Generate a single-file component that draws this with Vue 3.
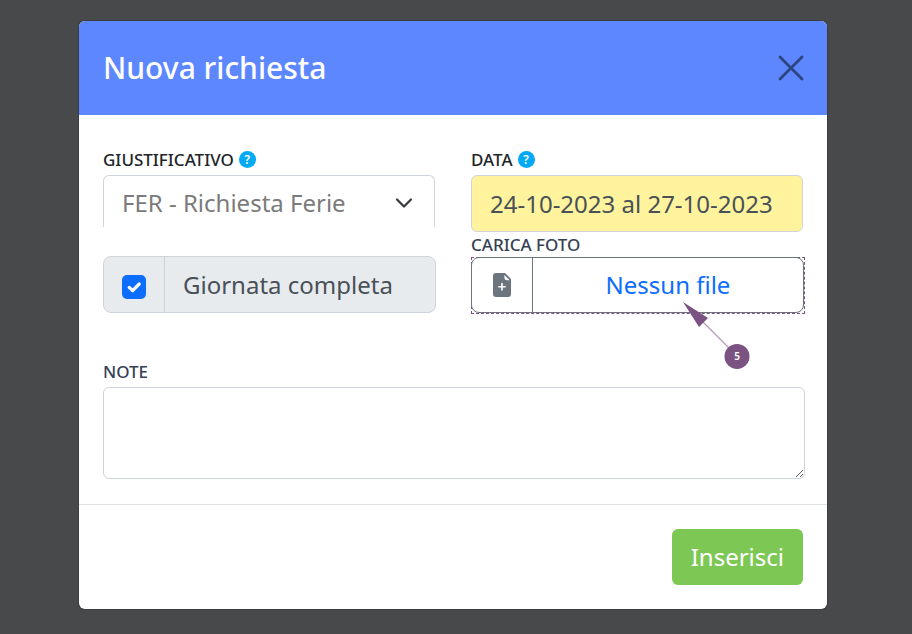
<script setup>
import { ref } from 'vue'

const absence = ref('FER')
const period = ref('24-10-2023 al 27-10-2023')
const fullDay = ref(true)
const notes = ref('')
</script>

<template>
  <main class="backdrop">
    <section class="modal" role="dialog" aria-labelledby="title">
      <header class="modal-header">
        <h1 id="title">Nuova richiesta</h1>
        <button class="close" type="button" aria-label="Chiudi">
          <svg viewBox="0 0 26 26" width="26" height="26">
            <path d="M2 2L24 24M24 2L2 24" fill="none" stroke="currentColor" stroke-width="2.8" stroke-linecap="round" />
          </svg>
        </button>
      </header>

      <form id="request" class="modal-body" @submit.prevent>
        <div class="columns">
          <div class="column">
            <div class="caption">
              <label for="absence">GIUSTIFICATIVO</label>
              <span class="help">?</span>
            </div>
            <div class="select-wrap">
              <select id="absence" v-model="absence" class="field">
                <option value="FER">FER - Richiesta Ferie</option>
              </select>
              <svg class="chevron" viewBox="0 0 18 18" width="18" height="18">
                <path d="M2 5.5L9 12.5L16 5.5" fill="none" stroke="#343a40" stroke-width="2.2" stroke-linecap="round" stroke-linejoin="round" />
              </svg>
            </div>
            <div class="check-group">
              <span class="check-cell">
                <input id="full-day" v-model="fullDay" type="checkbox" />
                <svg v-if="fullDay" viewBox="0 0 24 24" width="24" height="24">
                  <path d="M7.2 12.4L10.6 15.6L17.2 9" fill="none" stroke="#fff" stroke-width="3.2" stroke-linecap="round" stroke-linejoin="round" />
                </svg>
              </span>
              <label for="full-day">Giornata completa</label>
            </div>
          </div>

          <div class="column">
            <div class="caption">
              <label for="period">DATA</label>
              <span class="help">?</span>
            </div>
            <input id="period" v-model="period" class="field date" type="text" />
            <div class="caption slate upload-caption">
              <label for="photo">CARICA FOTO</label>
            </div>
            <div class="upload-frame">
              <input id="photo" class="file-input" type="file" />
              <label class="upload" for="photo">
                <span class="upload-icon">
                  <svg viewBox="0 0 18 24" width="18" height="24">
                    <path d="M3 0H12L18 6V21Q18 24 15 24H3Q0 24 0 21V3Q0 0 3 0Z" fill="#6c757d" />
                    <path d="M11.4 2L16.6 7.2H13.8Q11.4 7.2 11.4 4.8Z" fill="#fff" />
                    <path d="M9 10V17.4M5.3 13.7H12.7" stroke="#fff" stroke-width="1.6" />
                  </svg>
                </span>
                <span class="upload-text">Nessun file</span>
              </label>
              <svg class="callout" viewBox="0 0 70 70" width="70" height="70" aria-hidden="true">
                <path d="M22 22L49 49" stroke="#b194b5" stroke-width="1.1" />
                <path d="M3 3L28 19L19 28Z" fill="#7b5383" />
                <circle cx="57" cy="57.4" r="12.5" fill="#7b5383" />
                <text x="57" y="61" text-anchor="middle">5</text>
              </svg>
            </div>
          </div>
        </div>

        <div class="notes">
          <div class="caption slate">
            <label for="notes">NOTE</label>
          </div>
          <textarea id="notes" v-model="notes"></textarea>
        </div>
      </form>

      <footer class="modal-footer">
        <button class="submit" type="submit" form="request">Inserisci</button>
      </footer>
    </section>
  </main>
</template>

<style>
body {
  background: #48494b;
}
</style>

<style scoped>
.backdrop {
  box-sizing: border-box;
  padding: 21px 85px 24px 79px;
  font-family: "Noto Sans", sans-serif;
  font-size: 24px;
  line-height: 36px;
}
.backdrop *,
.backdrop *::before {
  box-sizing: border-box;
}
.modal {
  background: #fff;
  border-radius: 6px;
  box-shadow: 0 0 0 1px #3c3d40;
  overflow: hidden;
}
.modal-header {
  display: flex;
  align-items: center;
  justify-content: space-between;
  padding: 24px 23px 25px 24px;
  background: #5c87ff;
  color: #fff;
}
h1 {
  margin: 0;
  font-size: 30px;
  line-height: 45px;
  font-weight: 500;
}
button,
input,
select,
textarea {
  font: inherit;
}
.close {
  display: grid;
  padding: 0;
  border: 0;
  background: none;
  color: #2e4480;
}
.modal-body {
  padding: 32px 24px 25px;
}
.columns {
  display: grid;
  grid-template-columns: 1fr 1fr;
  gap: 36px;
}
.column {
  min-width: 0;
}
.caption {
  display: flex;
  align-items: center;
  gap: 5px;
  height: 28px;
  padding-bottom: 3px;
  color: #212529;
  font-size: 17px;
  line-height: 25px;
  font-weight: 500;
}
.slate {
  color: #364155;
}
.help {
  display: grid;
  place-items: center;
  width: 17px;
  height: 17px;
  border-radius: 50%;
  background: #03a9f4;
  color: #fff;
  font-size: 12px;
  line-height: 17px;
  font-weight: 600;
}
.field {
  display: block;
  width: 100%;
  height: 57px;
  padding: 0 18px;
  border: 1px solid #ced4da;
  border-radius: 6px;
  background: #fff;
}
.select-wrap {
  position: relative;
}
select.field {
  height: 52px;
  padding-top: 2px;
  border-bottom: 0;
  border-radius: 6px 6px 0 0;
  appearance: none;
  color: #7b7b7b;
}
.chevron {
  position: absolute;
  top: 19px;
  right: 22px;
  pointer-events: none;
}
.date {
  background: #fff49d;
  color: #495057;
}
.check-group {
  display: flex;
  height: 57px;
  margin: 29px -1px 0 0;
  border: 1px solid #ced4da;
  border-radius: 8px;
  background: #e8ebee;
  color: #495057;
}
.check-cell {
  display: grid;
  place-content: center;
  width: 61px;
  padding-top: 4px;
  border-right: 1px solid #ced4da;
}
.check-cell > * {
  grid-area: 1 / 1;
}
.check-cell input {
  width: 24px;
  height: 24px;
  margin: 0;
  border-radius: 5px;
  background: #fff;
  appearance: none;
}
.check-cell input:checked {
  background: #0d6efd;
}
.check-cell svg {
  pointer-events: none;
}
.check-group label {
  flex: 1;
  padding: 10px 18px;
}
.upload-caption {
  height: 25px;
  padding: 0;
}
.upload-frame {
  position: relative;
  height: 57px;
  margin-right: -2px;
  border: 1px dashed #7b5383;
}
.file-input {
  position: absolute;
  width: 1px;
  height: 1px;
  opacity: 0;
}
.upload {
  display: flex;
  height: 56px;
  margin: -1px 0 0 -1px;
  border: 1px solid #6c757d;
  border-radius: 8px;
  color: #0d6efd;
}
.upload-icon {
  display: grid;
  place-content: center;
  width: 61px;
  border-right: 1px solid #6c757d;
}
.upload-text {
  flex: 1;
  align-self: center;
  text-align: center;
}
.callout {
  position: absolute;
  top: 41px;
  right: 54px;
  pointer-events: none;
}
.callout text {
  fill: #fff;
  font-size: 10px;
  font-weight: 600;
}
.notes {
  margin: 45px -2px 0 0;
}
textarea {
  display: block;
  width: 100%;
  height: 92px;
  padding: 10px 18px;
  border: 1px solid #ced4da;
  border-radius: 6px;
  resize: vertical;
}
.modal-footer {
  display: flex;
  justify-content: flex-end;
  padding: 24px;
  border-top: 1px solid #dee2e6;
}
.submit {
  padding: 10px 19px;
  border: 0;
  border-radius: 6px;
  background: #7dc855;
  color: #fff;
}
</style>
